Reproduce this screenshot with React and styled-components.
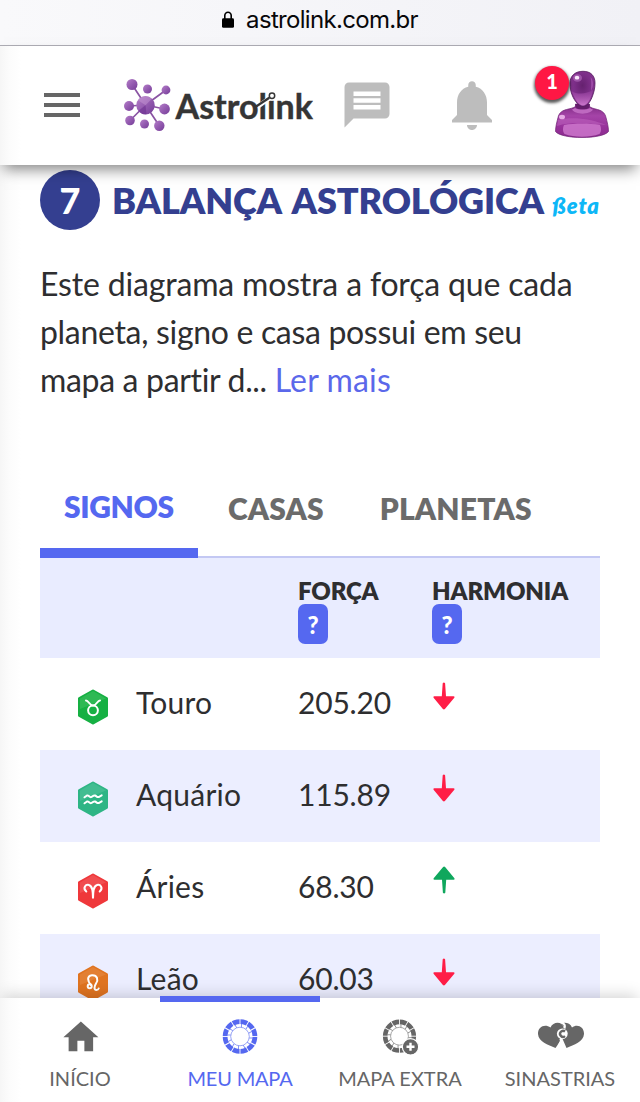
import React from 'react'
import styled, { createGlobalStyle } from 'styled-components'

const GlobalStyle = createGlobalStyle`
  * {
    box-sizing: border-box;
  }
  body {
    margin: 0;
    overflow: hidden;
    font-family: Lato, 'Liberation Sans', sans-serif;
    color: #2e2e30;
    background: #fff;
  }
  svg {
    display: block;
    flex: none;
  }
`

const edge = 'linear-gradient(to right, #f6f6f6 0, #fcfcfc 10px, #fff 21px)'

const Page = styled.div`
  display: flex;
  flex-direction: column;
  width: 640px;
  height: 1102px;
  overflow: hidden;
`

const UrlBar = styled.div`
  display: flex;
  flex: none;
  justify-content: center;
  align-items: center;
  gap: 12px;
  height: 46px;
  padding: 0 0 6px 0;
  border-bottom: 1px solid #aeadb5;
  background: linear-gradient(to right, #f9f9fb, #f1f1f6);
  color: #08080a;
  font-family: Inter, sans-serif;
  font-size: 24px;
  letter-spacing: -0.68px;
`

const Header = styled.header`
  position: relative;
  z-index: 2;
  display: flex;
  flex: none;
  align-items: center;
  height: 119px;
  padding: 0 0 1px 38px;
  background: ${edge};
  box-shadow: 0 8px 14px -4px rgba(0, 0, 0, 0.5);
`

const MenuButton = styled.div`
  margin-right: 36px;
`

const HeaderIcon = styled.div`
  margin-left: ${props => props.$gap}px;
`

const Profile = styled.div`
  position: relative;
  margin-left: 48px;
`

const Badge = styled.span`
  position: absolute;
  left: -15px;
  top: -2px;
  width: 34px;
  height: 34px;
  border-radius: 50%;
  background: #ff1744;
  box-shadow: 0 2px 3px 1px rgba(0, 0, 0, 0.65);
  color: #fff;
  font-size: 20px;
  font-weight: 900;
  line-height: 31px;
  text-align: center;
`

const Content = styled.main`
  flex: 1;
  min-height: 0;
  overflow: hidden;
  padding: 5px 40px 0;
  background: ${edge};
`

const TitleRow = styled.div`
  display: flex;
  align-items: center;
  height: 60px;
  white-space: nowrap;
`

const Step = styled.span`
  flex: none;
  width: 60px;
  height: 60px;
  margin-right: 12px;
  border-radius: 50%;
  background: #343f90;
  color: #fff;
  font-size: 36px;
  font-weight: 900;
  line-height: 60px;
  text-align: center;
`

const Title = styled.h1`
  margin: 0;
  padding-top: 5px;
  color: #343f90;
  font-size: 36px;
  font-weight: 800;
  letter-spacing: -0.15px;
  line-height: 60px;
  word-spacing: 4px;
`

const Beta = styled.em`
  margin-left: 8px;
  color: #0db7f7;
  font-size: 22px;
  font-weight: 800;
  letter-spacing: 0.9px;
`

const Intro = styled.p`
  margin: 30px 0 0;
  font-size: 32px;
  line-height: 48px;
  white-space: nowrap;
`

const Line = styled.span`
  display: block;
  letter-spacing: ${props => props.$track}px;
`

const More = styled.a`
  color: #5b68ea;
  letter-spacing: 0.15px;
`

const Tabs = styled.div`
  display: flex;
  height: 98px;
  margin-top: 56px;
  border-bottom: 2px solid #c3c8f3;
`

const Tab = styled.div`
  height: 98px;
  margin-right: ${props => (props.$active ? 6 : 8)}px;
  padding: ${props => (props.$active ? '27px' : '29px')} 24px 0;
  border-bottom: ${props => (props.$active ? '10px solid #5568f0' : '0')};
  color: ${props => (props.$active ? '#5568f0' : '#6b6b6b')};
  font-size: 30px;
  font-weight: 800;
  letter-spacing: ${props => (props.$active ? '-0.35px' : '0.15px')};
  line-height: 38px;
`

const Row = styled.div`
  display: grid;
  grid-template-columns: 96px 162px 134px 1fr;
  height: 92px;
  background: ${props => (props.$shaded ? '#eceeff' : 'transparent')};
  font-size: 30px;
  line-height: 89px;
`

const Name = styled.div`
  letter-spacing: 0.25px;
`

const Value = styled.div`
  letter-spacing: -0.2px;
`

const HeadRow = styled(Row)`
  height: 100px;
  padding-top: 20px;
  background: #e9ecff;
  font-size: 24px;
  font-weight: 800;
  letter-spacing: -0.15px;
  line-height: 26px;
`

const Help = styled.span`
  display: block;
  width: 30px;
  height: 40px;
  border-radius: 7px;
  background: #5568f0;
  color: #fff;
  font-size: 24px;
  font-weight: 900;
  line-height: 42px;
  text-align: center;
`

const SignCell = styled.div`
  padding: 31px 0 0 36.5px;
`

const TrendCell = styled.div`
  padding: 24px 0 0 1px;
`

const Footer = styled.nav`
  position: relative;
  z-index: 2;
  display: grid;
  flex: none;
  grid-template-columns: repeat(4, 1fr);
  height: 104px;
  background: ${edge};
  box-shadow: 0 -6px 14px -3px rgba(0, 0, 0, 0.17);
`

const NavItem = styled.div`
  display: flex;
  flex-direction: column;
  align-items: center;
  height: 106px;
  margin-top: -2px;
  padding-top: 14px;
  border-top: 6px solid ${props => (props.$active ? '#5568f0' : 'transparent')};
  color: ${props => (props.$active ? '#5568f0' : '#666')};
  font-size: 20px;
  letter-spacing: ${props => (props.$active ? '-0.2px' : '0')};
  line-height: 24px;
  white-space: nowrap;
`

const NavIcon = styled.div`
  display: flex;
  justify-content: center;
  height: 42px;
  margin-bottom: 8px;
`

const Lock = () => (
  <svg width="12" height="17" viewBox="0 0 12 17">
    <path d="M2.8 8V4.6a3.2 3.4 0 0 1 6.4 0V8" fill="none" stroke="#000" strokeWidth="1.6" />
    <rect width="12" height="9.6" y="7.2" rx="1.4" />
  </svg>
)

const nodes = [
  [132, 84.5, 5.5],
  [147.5, 89, 4.5],
  [166, 90, 4.4],
  [129, 106, 5],
  [164.5, 109, 5.4],
  [130, 120.5, 4.8],
  [144.5, 124, 4.5],
  [159.3, 125.7, 5.2],
]

const Logo = () => (
  <svg width="200" height="62" viewBox="122 74 200 62">
    <defs>
      <linearGradient id="node" x1="0" y1="0" x2="1" y2="1">
        <stop offset="0" stopColor="#b57fc9" />
        <stop offset="0.5" stopColor="#945bb0" />
        <stop offset="1" stopColor="#753d98" />
      </linearGradient>
    </defs>
    <path
      d="M145.5 105L132 84.5M145.5 105L166 90M145.5 105L129 106M145.5 105L164.5 109M145.5 105L130 120.5M145.5 105L159.3 125.7"
      stroke="#8a54a3"
      strokeWidth="1.7"
    />
    {nodes.map(([x, y, r]) => (
      <circle key={x} cx={x} cy={y} r={r} fill="url(#node)" />
    ))}
    <circle cx="145.5" cy="105.3" r="9.2" fill="url(#node)" />
    <path d="M145.5 105.3l-7.5-5a9 9 0 0 1 14-1.5z" fill="#c598d4" opacity=".5" />
    <path d="M145.5 105.3l-7 5.4a9 9 0 0 0 8 3.6z" fill="#6c318f" opacity=".6" />
    <text
      x="175.5"
      y="119"
      textLength="137.5"
      lengthAdjust="spacingAndGlyphs"
      fill="#353535"
      stroke="#353535"
      strokeWidth=".4"
      fontFamily="Lato, sans-serif"
      fontSize="35"
      fontWeight="700"
    >
      Astrolink
    </text>
    <circle cx="272" cy="95.7" r="4.8" fill="#fff" />
    <path d="M258 106.500L269 98.500" stroke="#fff" strokeWidth="4.400" />
    <path d="M254.500 107.500L269.300 97.700" stroke="#353535" strokeWidth="2.400" />
    <circle cx="272" cy="95.7" r="2.7" fill="#fff" stroke="#353535" strokeWidth="1.5" />
  </svg>
)

const MenuIcon = () => (
  <svg width="48" height="48" viewBox="0 0 24 24" fill="#666">
    <path d="M3 18h18v-2H3v2zm0-5h18v-2H3v2zm0-7v2h18V6H3z" />
  </svg>
)

const MessageIcon = () => (
  <svg width="54" height="55" viewBox="0 0 24 24.44" preserveAspectRatio="xMidYMin" fill="#bdbdbd">
    <path d="M20 2H4c-1.1 0-1.99.9-1.99 2L2 22l4-4h14c1.1 0 2-.9 2-2V4c0-1.1-.9-2-2-2zm-2 12H6v-2h12v2zm0-3H6V9h12v2zm0-3H6V6h12v2z" />
  </svg>
)

const BellIcon = () => (
  <svg width="60" height="60" viewBox="0 0 24 24" fill="#bdbdbd">
    <path d="M12 22c1.1 0 2-.9 2-2h-4c0 1.1.89 2 2 2zm6-6v-5c0-3.07-1.64-5.64-4.5-6.32V4c0-.83-.67-1.5-1.5-1.5s-1.5.67-1.5 1.5v.68C7.63 5.36 6 7.92 6 11v5l-2 2v1h16v-1l-2-2z" />
  </svg>
)

const Avatar = () => (
  <svg width="62" height="74" viewBox="550 68 62 74">
    <defs>
      <radialGradient id="head" cx="0.5" cy="0.4" r="0.65">
        <stop offset="0" stopColor="#65216f" />
        <stop offset="0.5" stopColor="#7c2e88" />
        <stop offset="1" stopColor="#8a3893" />
      </radialGradient>
      <linearGradient id="jaw" x1="0" y1="0" x2="0" y2="1">
        <stop offset="0" stopColor="#a94db0" stopOpacity="0.3" />
        <stop offset="1" stopColor="#cb77cb" />
      </linearGradient>
      <linearGradient id="bust" x1="0" y1="0" x2="0" y2="1">
        <stop offset="0" stopColor="#7b2880" />
        <stop offset="0.35" stopColor="#a544a8" />
        <stop offset="0.7" stopColor="#97319a" />
        <stop offset="1" stopColor="#8b2c8e" />
      </linearGradient>
    </defs>
    <path
      d="M575.500 104v2.500c-2 1.500-5 2-9 3-5.500 1.500-7.500 4-8.500 8-1 4-2.500 9-2.500 14 6 8 47 8 53 0 0-5-1.500-10-2.500-14-1-4-3-6.500-8.500-8-4-1-6-1.500-8-3V104z"
      fill="url(#bust)"
      stroke="#6f2374"
      strokeWidth=".7"
    />
    <path d="M575.500 104h14v3c-3 3.500-11 3.500-14 0z" fill="#651d6c" />
    <path d="M575 108c3 2 12 2 15 0 1 .8 2 1.200 3 1.500-3 5.500-18 5.500-21 0 1-.3 2-.7 3-1.500z" fill="#be69c0" />
    <path d="M558 120c14-4 34-1 48 5-12 0-30-5-49 1z" fill="#c56cc6" opacity=".45" />
    <path d="M564 125c11-2 25-2 36 0 1.500 3 1.500 6.500-.5 9-10 3.500-25 3.500-35 0-2-2.500-2-6-.5-9z" fill="#d480d3" opacity=".75" />
    <ellipse cx="562" cy="117" rx="3" ry="2.300" fill="#f1bdef" opacity=".85" />
    <path
      d="M583 71.300c8 0 12 4.700 12 11.700 0 5-1 9-2.500 13-1.500 4.500-5 10.500-9.500 10.500s-8.500-6-10.500-10.500C570.800 92 570 88 570 83c0-7 5-11.700 13-11.700z"
      fill="url(#head)"
      stroke="#541a5e"
      strokeWidth=".8"
    />
    <path d="M571.500 91c6 4 15 3 21.500-1-.3 2-1 4-1.500 5.500-1.500 4.500-4.500 10-8.500 10s-7.500-5.500-9.500-10c-.7-1.500-1.500-3-2-4.500z" fill="url(#jaw)" />
    <path d="M590.500 77c3 3 3.500 9 .5 14 0-5 .8-9-.5-14z" fill="#b864bf" opacity=".6" />
    <ellipse cx="577.500" cy="78" rx="4.500" ry="3.800" fill="#b870c2" opacity=".6" />
    <ellipse cx="577" cy="77.700" rx="2.300" ry="1.900" fill="#fae8fb" />
  </svg>
)

const glyphs = {
  taurus: (
    <>
      <path d="M9 11.500c2.800 0 3.300 5 7 5s4.200-5 7-5" />
      <circle cx="16" cy="21.300" r="4.900" />
    </>
  ),
  aquarius: (
    <>
      <path d="M7.500 16.300l2.500-1.800c1.500-.8 2.500 2 4 1.600s2.500-2.200 4-1.600 2.200 2 3.700 1.500l3-1.700" />
      <path d="M7.500 22.300l2.500-1.800c1.500-.8 2.500 2 4 1.600s2.500-2.200 4-1.600 2.200 2 3.700 1.500l3-1.700" />
    </>
  ),
  aries: (
    <path d="M9.300 18.500c-4-3.500-.5-7.500 2.700-6.500 3.500 1 4 6 4 13.500 0-7.500.5-12.500 4-13.500 3.200-1 6.700 3 2.700 6.500" />
  ),
  leo: (
    <>
      <path d="M14 20c-3.500-4-4.500-9 1-9.800 5.500-.3 6.500 4.800 4 8.300-1.600 2.500-2.500 6.500.5 6.500 1.200 0 1.900-.7 2.200-1.500" />
      <circle cx="12.700" cy="21.300" r="2" />
    </>
  ),
}

const SignIcon = ({ sign, color, light }) => (
  <svg width="32" height="36" viewBox="0 0 32 36">
    <path
      d="M16 2L29.500 9.500v17L16 34 2.500 26.500v-17z"
      fill={color}
      stroke={color}
      strokeWidth="3"
      strokeLinejoin="round"
    />
    <path d="M16 2L29 9.500 3 20V9.500z" fill={light} opacity=".45" />
    <g fill="none" stroke="#fff" strokeWidth="2" strokeLinecap="round">
      {glyphs[sign]}
    </g>
  </svg>
)

const TrendArrow = ({ up }) => (
  <svg width="22" height="28" viewBox="0 0 22 28" fill={up ? '#0fa75d' : '#ff1d46'}>
    <path
      transform={up ? 'rotate(180 11 14)' : undefined}
      d="M9.700 1.200q1.200-1.400 2.400 0L13 14.300h7.500q1.700.2.600 1.600L11.900 27q-1 .9-2 0L.8 15.900Q-.2 14.500 1.300 14.300h7.500z"
    />
  </svg>
)

const angles = [0, 30, 60, 90, 120, 150, 180, 210, 240, 270, 300, 330]

const Wheel = ({ extra }) => (
  <svg width="40" height="42" viewBox="-20 -20.500 40 42">
    <g transform={extra ? 'translate(-.5 -.3) scale(.96)' : undefined}>
      <circle r="14.900" fill="none" stroke="currentColor" strokeWidth="4.800" />
      <circle r="9.300" fill="none" stroke="currentColor" strokeWidth=".7" opacity=".85" />
      {angles.map(a => (
        <g key={a} transform={`rotate(${a})`}>
          <path d="M0-18v6" stroke="#fff" strokeWidth=".9" />
          <path d="M1.500-12.500v3.200" stroke="currentColor" strokeWidth=".7" />
        </g>
      ))}
    </g>
    {extra && (
      <>
        <circle cx="10.500" cy="10.300" r="8.200" fill="currentColor" stroke="#fff" strokeWidth="1.200" />
        <path d="M10.500 6.300v8M6.500 10.300h8" stroke="#fff" strokeWidth="2.400" />
      </>
    )}
  </svg>
)

const HomeIcon = () => (
  <svg width="42" height="42" viewBox="-.5 -.2 24 24" fill="currentColor">
    <path d="M10 20v-6h4v6h5v-8h3L12 3 2 12h3v8z" />
  </svg>
)

const Hearts = () => (
  <svg width="48" height="42" viewBox="536 1016 48 42">
    <path
      d="M555.500 1048c-7.500-3-17-6.500-17.500-14-.2-7.500 7-10.500 12.500-6.500 3-6.500 12-6 13.500.5 1.500 6-4 13-8.500 20z"
      fill="currentColor"
    />
    <path
      d="M566.500 1048c7.500-3 17-6.500 17.500-14 .2-7.500-7-10.500-12-6.500-1.800-4.500-7-5.500-10.500-4l3 4-3 9z"
      fill="currentColor"
    />
    <path
      d="M561.500 1022.500c3 1 4 3 3 6M560 1038.500c2.500 1.500.5 4.500-1.500 9"
      fill="none"
      stroke="#fff"
      strokeWidth="2.200"
    />
    <path d="M559.500 1042l3.500 1 3.200 6.500h-10z" fill="#fff" />
    <circle cx="562.300" cy="1033.800" r="5.400" fill="#fff" />
    <path d="M565 1031.500a3 3 0 1 0 0 4.600" fill="none" stroke="currentColor" strokeWidth="2.400" />
  </svg>
)

const rows = [
  { sign: 'taurus', name: 'Touro', value: '205.20', color: '#16b043', light: '#4cc66b' },
  { sign: 'aquarius', name: 'Aquário', value: '115.89', color: '#2eb585', light: '#5cc7a0' },
  { sign: 'aries', name: 'Áries', value: '68.30', color: '#ef383b', light: '#f4696b', up: true },
  { sign: 'leo', name: 'Leão', value: '60.03', color: '#e07420', light: '#e6904b' },
]

const App = () => {
  return (
    <Page>
      <GlobalStyle />
      <UrlBar>
        <Lock />
        <span>astrolink.com.br</span>
      </UrlBar>
      <Header>
        <MenuButton><MenuIcon /></MenuButton>
        <Logo />
        <HeaderIcon $gap={18}><MessageIcon /></HeaderIcon>
        <HeaderIcon $gap={48}><BellIcon /></HeaderIcon>
        <Profile>
          <Avatar />
          <Badge>1</Badge>
        </Profile>
      </Header>
      <Content>
        <TitleRow>
          <Step>7</Step>
          <Title>BALANÇA ASTROLÓGICA<Beta>ßeta</Beta></Title>
        </TitleRow>
        <Intro>
          <Line $track={-0.17}>Este diagrama mostra a força que cada</Line>
          <Line $track={-0.32}>planeta, signo e casa possui em seu</Line>
          <Line $track={-0.33}>mapa a partir d... <More>Ler mais</More></Line>
        </Intro>
        <Tabs>
          <Tab $active>SIGNOS</Tab>
          <Tab>CASAS</Tab>
          <Tab>PLANETAS</Tab>
        </Tabs>
        <HeadRow>
          <div />
          <div />
          <div>FORÇA<Help>?</Help></div>
          <div>HARMONIA<Help>?</Help></div>
        </HeadRow>
        {rows.map((row, i) => (
          <Row key={row.sign} $shaded={i % 2 === 1}>
            <SignCell><SignIcon {...row} /></SignCell>
            <Name>{row.name}</Name>
            <Value>{row.value}</Value>
            <TrendCell><TrendArrow up={row.up} /></TrendCell>
          </Row>
        ))}
      </Content>
      <Footer>
        <NavItem>
          <NavIcon><HomeIcon /></NavIcon>
          INÍCIO
        </NavItem>
        <NavItem $active>
          <NavIcon><Wheel /></NavIcon>
          MEU MAPA
        </NavItem>
        <NavItem>
          <NavIcon><Wheel extra /></NavIcon>
          MAPA EXTRA
        </NavItem>
        <NavItem>
          <NavIcon><Hearts /></NavIcon>
          SINASTRIAS
        </NavItem>
      </Footer>
    </Page>
  )
}

export default App
